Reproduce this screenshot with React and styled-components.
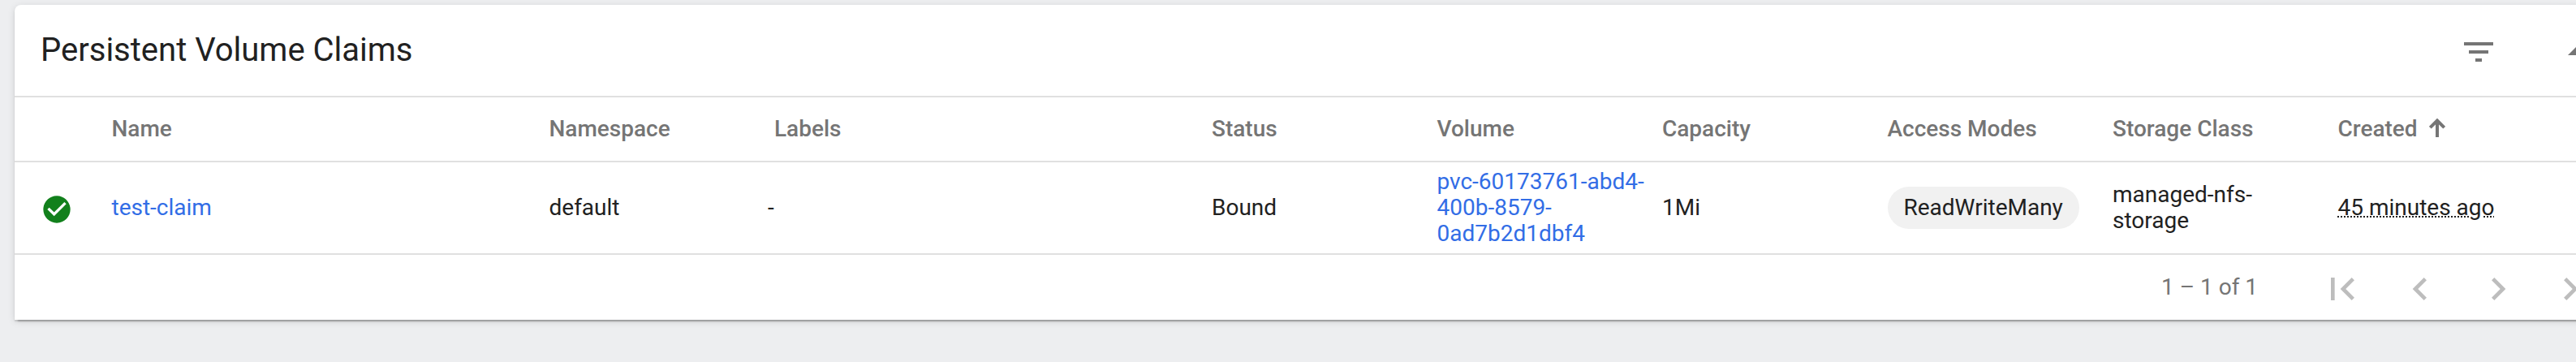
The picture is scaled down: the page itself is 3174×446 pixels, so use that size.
import React from 'react';
import styled, { createGlobalStyle, css } from 'styled-components';
import {
  MdArrowDropUp,
  MdCheckCircle,
  MdChevronLeft,
  MdChevronRight,
  MdFilterList,
  MdFirstPage,
  MdLastPage,
} from 'react-icons/md';

const claims = [
  {
    name: 'test-claim',
    namespace: 'default',
    labels: '-',
    status: 'Bound',
    volume: 'pvc-60173761-abd4-400b-8579-0ad7b2d1dbf4',
    capacity: '1Mi',
    accessMode: 'ReadWriteMany',
    storageClass: 'managed-nfs-storage',
    created: '45 minutes ago',
  },
];

const App = () => (
  <>
    <GlobalStyle />
    <Page>
      <Card>
        <CardHeader>
          <Title>Persistent Volume Claims</Title>
          <Actions>
            <MdFilterList />
            <MdArrowDropUp />
          </Actions>
        </CardHeader>

        <HeaderRow>
          <span />
          <HeaderCell>Name</HeaderCell>
          <HeaderCell>Namespace</HeaderCell>
          <HeaderCell>Labels</HeaderCell>
          <HeaderCell>Status</HeaderCell>
          <HeaderCell>Volume</HeaderCell>
          <HeaderCell>Capacity</HeaderCell>
          <HeaderCell>Access Modes</HeaderCell>
          <HeaderCell>Storage Class</HeaderCell>
          <HeaderCell>
            Created
            <SortArrow viewBox="0 0 20 23">
              <path d="M10 23V3M1.3 11.2L10 2.5l8.7 8.7" />
            </SortArrow>
          </HeaderCell>
        </HeaderRow>

        {claims.map(claim => (
          <Row key={claim.name}>
            <StatusIcon />
            <Cell><Link>{claim.name}</Link></Cell>
            <Cell>{claim.namespace}</Cell>
            <Cell $chips>{claim.labels}</Cell>
            <Cell>{claim.status}</Cell>
            <Cell><Link>{claim.volume}</Link></Cell>
            <Cell>{claim.capacity}</Cell>
            <Cell><Chip>{claim.accessMode}</Chip></Cell>
            <Cell>{claim.storageClass}</Cell>
            <Cell><RelativeTime>{claim.created}</RelativeTime></Cell>
          </Row>
        ))}

        <Paginator>
          <Range>1 – 1 of 1</Range>
          <PageButtons>
            <MdFirstPage />
            <MdChevronLeft />
            <MdChevronRight />
            <MdLastPage />
          </PageButtons>
        </Paginator>
      </Card>
    </Page>
  </>
);

const GlobalStyle = createGlobalStyle`
  body {
    margin: 0;
    overflow: hidden;
    background: #edeef0;
    font-family: Roboto, 'Liberation Sans', sans-serif;
    color: #212121;
  }
`;
const Page = styled.main`
  box-sizing: border-box;
  width: 3174px;
  height: 446px;
  padding: 6px 0 0 18px;
  overflow: hidden;
`;
/* wider than the window, the right edge is scrolled out */
const Card = styled.section`
  width: 3210px;
  height: 388px;
  background: #fff;
  border-radius: 8px 8px 0 0;
  box-shadow: 0 6px 2px -4px rgba(0, 0, 0, 0.2),
    0 2px 2px 0 rgba(0, 0, 0, 0.14),
    0 2px 10px 0 rgba(0, 0, 0, 0.12);
`;
const CardHeader = styled.header`
  box-sizing: border-box;
  display: flex;
  height: 114px;
  padding-left: 32px;
  border-bottom: 2px solid #e0e0e0;
`;
const Title = styled.h1`
  width: 2980px;
  margin: 0;
  font-size: 40px;
  font-weight: 400;
  line-height: 112px;
`;
const Actions = styled.div`
  display: flex;
  flex-shrink: 0;
  gap: 72px;
  padding-top: 34px;
  color: #757575;

  svg {
    width: 48px;
    height: 48px;
  }
`;
const columns = css`
  box-sizing: border-box;
  display: grid;
  grid-template-columns: 87.5px 539px 277.5px 539px repeat(6, 277.5px);
  align-items: center;
  padding-left: 32px;
  border-bottom: 2px solid #e0e0e0;
  font-size: 28px;
`;
const HeaderRow = styled.div`
  ${columns}
  height: 80px;
  color: #757575;
`;
const HeaderCell = styled.div`
  display: flex;
  align-items: center;
  font-weight: 500;
  line-height: 32px;
`;
const SortArrow = styled.svg`
  width: 20px;
  height: 23px;
  margin: 0 0 4px 14px;
  fill: none;
  stroke: currentColor;
  stroke-width: 4;
`;
const Row = styled.div`
  ${columns}
  height: 114px;
`;
const StatusIcon = styled(MdCheckCircle)`
  width: 40px;
  height: 40px;
  margin-top: 4px;
  color: #12801c;
`;
const Cell = styled.div`
  padding-right: 20px;
  line-height: 32px;
  ${props => props.$chips && 'margin-left: -8px;'}
`;
const Link = styled.a`
  color: #326de6;
`;
const Chip = styled.span`
  display: inline-block;
  padding: 0 20px;
  border-radius: 26px;
  background: #f1f1f1;
  line-height: 52px;
`;
const RelativeTime = styled.span`
  text-decoration: underline dotted 2px;
`;
const Paginator = styled.footer`
  display: flex;
  height: 80px;
  color: #757575;
`;
const Range = styled.div`
  width: 195px;
  padding-left: 2645px;
  font-size: 28px;
  line-height: 80px;
`;
const PageButtons = styled.div`
  display: flex;
  gap: 40px;
  padding-top: 14px;
  color: #bdbdbd;

  svg {
    width: 56px;
    height: 56px;
  }
`;

export default App;
